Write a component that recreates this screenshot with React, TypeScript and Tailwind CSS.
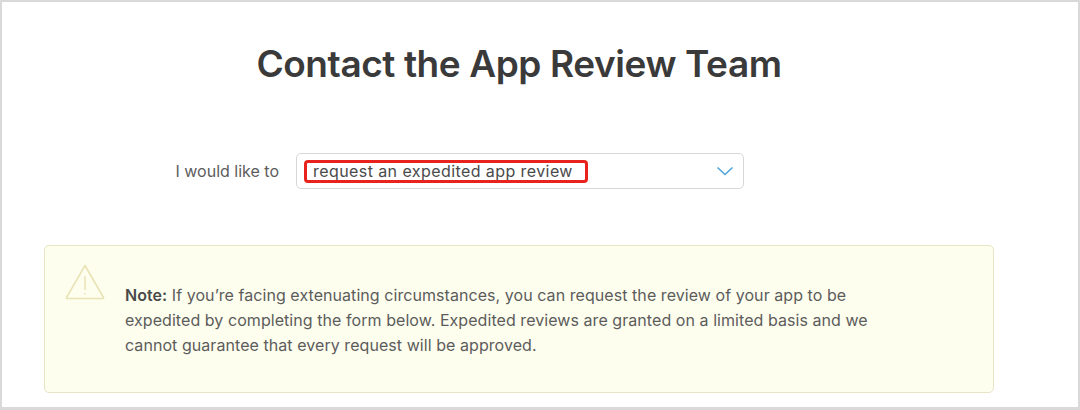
import React from 'react';

const TriangleIcon = () => (
    <svg width="40" height="36" viewBox="0 0 40 36" fill="none" stroke="#e8e2b4" strokeWidth="1.5" strokeLinejoin="round">
        <path d="M20 1.5 L38.5 33.5 Q39 34.5 38 34.5 L2 34.5 Q1 34.5 1.5 33.5 Z" />
        <path d="M20 12 L20 26" />
        <path d="M20 29 L20 30.5" />
    </svg>
);

export default function App() {
    return (
        <div className="w-[1080px] h-[410px] overflow-hidden bg-white border-t-2 border-l-2 border-r-2 border-b-[3px] border-[#d9d9d9] font-['Inter','Liberation_Sans',sans-serif] text-[#333333]">
            <h1 className="pt-[39px] pr-[42px] text-center text-[37px] leading-[46px] font-semibold tracking-[-0.42px] text-[#3a3a3a]">
                Contact the App Review Team
            </h1>

            <div className="mt-[66px] flex items-center">
                <label className="w-[277px] text-right text-[16px] text-[#5c5c5c]">I would like to</label>
                <div className="relative ml-[17px] flex h-[36px] w-[448px] items-center justify-between rounded-[5px] border border-[#d6d6da] bg-white pl-[16px] pr-[9px]">
                    <span className="text-[16px] tracking-[0.42px] text-[#4a4a4a]">request an expedited app review</span>
                    <svg width="18" height="10" viewBox="0 0 18 10" fill="none" stroke="#4ea5d9" strokeWidth="1.6">
                        <path d="M1.5 1.5 L9 8.5 L16.5 1.5" />
                    </svg>
                    <div className="absolute left-[7px] top-[6px] h-[23px] w-[284px] rounded-[4px] border-[3px] border-[#e8221c]" />
                </div>
            </div>

            <div className="mt-[56px] ml-[42px] flex h-[148px] w-[950px] rounded-[5px] border border-[#e8e4c4] bg-[#fefeee]">
                <div className="w-[80px] shrink-0 pl-[20px] pt-[18px]">
                    <TriangleIcon />
                </div>
                <p className="pt-[37px] w-[770px] text-[16px] leading-[25px] tracking-[0.06px] text-[#5c5c5c]">
                    <strong className="font-semibold text-[#4a4a4a]">Note:</strong> If you’re facing extenuating circumstances, you can request the review of your app to be expedited by completing the form below. Expedited reviews are granted on a limited basis and we cannot guarantee that every request will be approved.
                </p>
            </div>
        </div>
    );
}
